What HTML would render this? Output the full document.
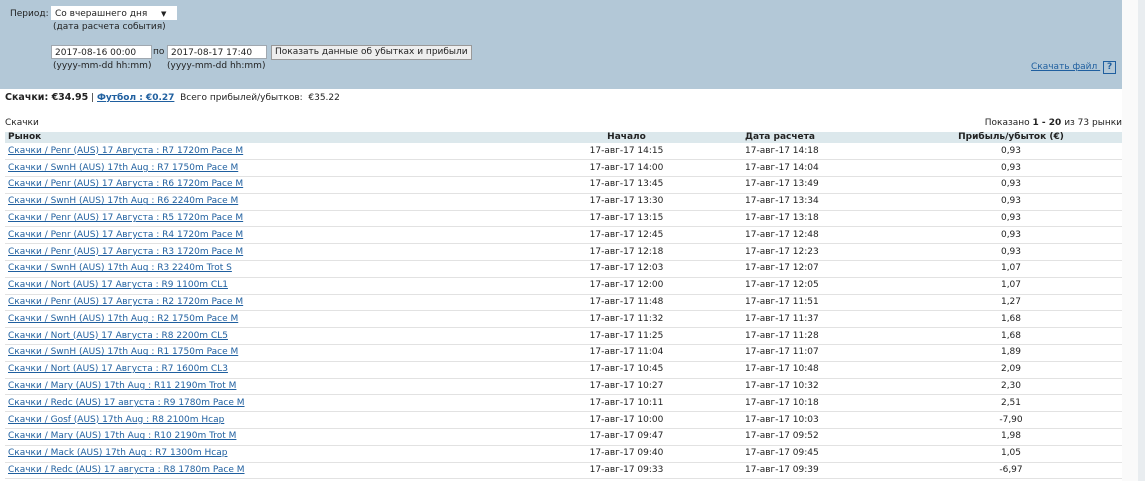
<!DOCTYPE html>
<html><head><meta charset="utf-8"><style>
body{margin:0;width:1145px;height:481px;overflow:hidden;background:#fff;font-family:"DejaVu Sans","Liberation Sans",sans-serif;font-size:9px;color:#222;position:relative}
.sb{position:absolute;left:1122px;top:0;width:16px;height:481px;background:#fafafa}
.sb2{position:absolute;left:1138px;top:0;width:7px;height:481px;background:#e9edf0}
.panel{position:absolute;left:0;top:0;width:1122px;height:89px;background:#b3c8d7}
.abs{position:absolute;white-space:nowrap}
.inp{position:absolute;background:#fff;border:1px solid #a0a8b0;height:14px;line-height:14px;padding-left:3px;box-sizing:border-box}
.btn{position:absolute;background:#eee;border:1px solid #999;height:15px;line-height:13px;padding:0 3px;box-sizing:border-box}
a{color:#1f5f9f;text-decoration:underline}
table{position:absolute;left:5px;top:132px;width:1117px;border-collapse:collapse}
th{background:#dce8ec;height:11px;font-weight:bold;padding:0 3px;line-height:11px}
td{height:16.8px;padding:0 3px;border-bottom:1px solid #e2e2e2;box-sizing:border-box;line-height:15px}
.c{text-align:center}
</style></head><body>
<div class="panel"></div>
<div class="sb"></div><div class="sb2"></div>
<div class="abs" style="left:10px;top:9px">Период:</div>
<div class="inp" style="left:51px;top:6px;width:126px;border-color:#fff">Со вчерашнего дня <span style="position:absolute;left:109px;font-size:7px">▼</span></div>
<div class="abs" style="left:53px;top:22px">(дата расчета события)</div>
<div class="inp" style="left:51px;top:45px;width:101px">2017-08-16 00:00</div>
<div class="abs" style="left:153px;top:47px">по</div>
<div class="inp" style="left:167px;top:45px;width:100px">2017-08-17 17:40</div>
<div class="btn" style="left:271px;top:45px">Показать данные об убытках и прибыли</div>
<div class="abs" style="left:53px;top:61px">(yyyy-mm-dd hh:mm)</div>
<div class="abs" style="left:167px;top:61px">(yyyy-mm-dd hh:mm)</div>
<div class="abs" style="left:1031px;top:61px"><a href="#">Скачать файл </a><span style="display:inline-block;border:1px solid #1f5f9f;width:11px;height:11px;line-height:11px;text-align:center;color:#1f5f9f;font-weight:bold;margin-left:3px">?</span></div>
<div class="abs" style="left:5px;top:92px"><b style="font-size:9.5px">Скачки: €34.95</b> | <a href="#"><b>Футбол : €0.27</b></a>&nbsp; Всего прибылей/убытков:&nbsp; €35.22</div>
<div class="abs" style="left:5px;top:118px">Скачки</div>
<div class="abs" style="right:23px;top:118px">Показано <b>1 - 20</b> из 73 рынки</div>
<table>
<tr><th style="text-align:left;width:500px">Рынок</th><th class="c" style="width:225px">Начало</th><th style="text-align:left;width:180px">Дата расчета</th><th class="c" style="width:160px">Прибыль/убыток (€)</th><th></th></tr>
<tr><td><a href="#">Скачки / Penr (AUS) 17 Августа : R7 1720m Pace M</a></td><td class="c">17-авг-17 14:15</td><td>17-авг-17 14:18</td><td class="c">0,93</td><td></td></tr>
<tr><td><a href="#">Скачки / SwnH (AUS) 17th Aug : R7 1750m Pace M</a></td><td class="c">17-авг-17 14:00</td><td>17-авг-17 14:04</td><td class="c">0,93</td><td></td></tr>
<tr><td><a href="#">Скачки / Penr (AUS) 17 Августа : R6 1720m Pace M</a></td><td class="c">17-авг-17 13:45</td><td>17-авг-17 13:49</td><td class="c">0,93</td><td></td></tr>
<tr><td><a href="#">Скачки / SwnH (AUS) 17th Aug : R6 2240m Pace M</a></td><td class="c">17-авг-17 13:30</td><td>17-авг-17 13:34</td><td class="c">0,93</td><td></td></tr>
<tr><td><a href="#">Скачки / Penr (AUS) 17 Августа : R5 1720m Pace M</a></td><td class="c">17-авг-17 13:15</td><td>17-авг-17 13:18</td><td class="c">0,93</td><td></td></tr>
<tr><td><a href="#">Скачки / Penr (AUS) 17 Августа : R4 1720m Pace M</a></td><td class="c">17-авг-17 12:45</td><td>17-авг-17 12:48</td><td class="c">0,93</td><td></td></tr>
<tr><td><a href="#">Скачки / Penr (AUS) 17 Августа : R3 1720m Pace M</a></td><td class="c">17-авг-17 12:18</td><td>17-авг-17 12:23</td><td class="c">0,93</td><td></td></tr>
<tr><td><a href="#">Скачки / SwnH (AUS) 17th Aug : R3 2240m Trot S</a></td><td class="c">17-авг-17 12:03</td><td>17-авг-17 12:07</td><td class="c">1,07</td><td></td></tr>
<tr><td><a href="#">Скачки / Nort (AUS) 17 Августа : R9 1100m CL1</a></td><td class="c">17-авг-17 12:00</td><td>17-авг-17 12:05</td><td class="c">1,07</td><td></td></tr>
<tr><td><a href="#">Скачки / Penr (AUS) 17 Августа : R2 1720m Pace M</a></td><td class="c">17-авг-17 11:48</td><td>17-авг-17 11:51</td><td class="c">1,27</td><td></td></tr>
<tr><td><a href="#">Скачки / SwnH (AUS) 17th Aug : R2 1750m Pace M</a></td><td class="c">17-авг-17 11:32</td><td>17-авг-17 11:37</td><td class="c">1,68</td><td></td></tr>
<tr><td><a href="#">Скачки / Nort (AUS) 17 Августа : R8 2200m CL5</a></td><td class="c">17-авг-17 11:25</td><td>17-авг-17 11:28</td><td class="c">1,68</td><td></td></tr>
<tr><td><a href="#">Скачки / SwnH (AUS) 17th Aug : R1 1750m Pace M</a></td><td class="c">17-авг-17 11:04</td><td>17-авг-17 11:07</td><td class="c">1,89</td><td></td></tr>
<tr><td><a href="#">Скачки / Nort (AUS) 17 Августа : R7 1600m CL3</a></td><td class="c">17-авг-17 10:45</td><td>17-авг-17 10:48</td><td class="c">2,09</td><td></td></tr>
<tr><td><a href="#">Скачки / Mary (AUS) 17th Aug : R11 2190m Trot M</a></td><td class="c">17-авг-17 10:27</td><td>17-авг-17 10:32</td><td class="c">2,30</td><td></td></tr>
<tr><td><a href="#">Скачки / Redc (AUS) 17 августа : R9 1780m Pace M</a></td><td class="c">17-авг-17 10:11</td><td>17-авг-17 10:18</td><td class="c">2,51</td><td></td></tr>
<tr><td><a href="#">Скачки / Gosf (AUS) 17th Aug : R8 2100m Hcap</a></td><td class="c">17-авг-17 10:00</td><td>17-авг-17 10:03</td><td class="c">-7,90</td><td></td></tr>
<tr><td><a href="#">Скачки / Mary (AUS) 17th Aug : R10 2190m Trot M</a></td><td class="c">17-авг-17 09:47</td><td>17-авг-17 09:52</td><td class="c">1,98</td><td></td></tr>
<tr><td><a href="#">Скачки / Mack (AUS) 17th Aug : R7 1300m Hcap</a></td><td class="c">17-авг-17 09:40</td><td>17-авг-17 09:45</td><td class="c">1,05</td><td></td></tr>
<tr><td><a href="#">Скачки / Redc (AUS) 17 августа : R8 1780m Pace M</a></td><td class="c">17-авг-17 09:33</td><td>17-авг-17 09:39</td><td class="c">-6,97</td><td></td></tr>
</table>
</body></html>
